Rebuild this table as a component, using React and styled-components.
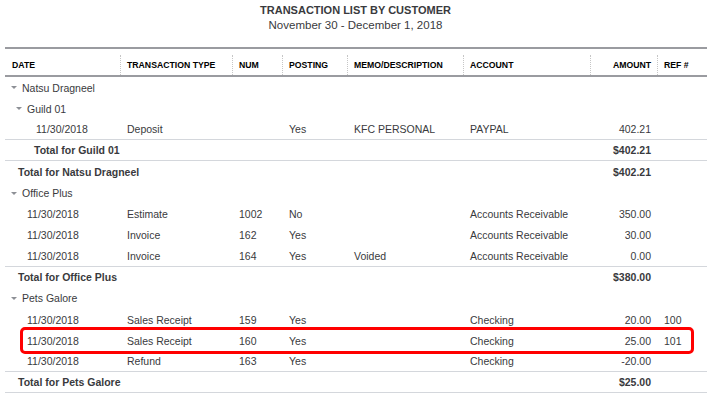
import React from "react";
import styled, { createGlobalStyle } from "styled-components";

const GlobalStyle = createGlobalStyle`
  body {
    margin: 0;
    background: #fff;
    font-family: "Liberation Sans", Arial, sans-serif;
    color: #393a3d;
  }
`;

const COLUMNS = "115px 112px 50px 65px 116px 127px 67px 50px";

const Page = styled.div`
  width: 711px;
`;

const TitleBlock = styled.header`
  height: 47px;
  padding-top: 3px;
  box-sizing: border-box;
  text-align: center;
`;

const Title = styled.h1`
  margin: 0;
  font-size: 11px;
  line-height: 14px;
  font-weight: 700;
  color: #393a3d;
`;

const Subtitle = styled.div`
  margin-top: 1px;
  font-size: 11.5px;
  line-height: 14px;
`;

const Table = styled.div`
  margin-left: 5px;
  width: 702px;
`;

const HeaderRow = styled.div`
  display: grid;
  grid-template-columns: ${COLUMNS};
  height: 30px;
  box-sizing: border-box;
  padding-top: 6px;
  border-top: 2px solid #9a9ba0;
  border-bottom: 2px solid #9a9ba0;
`;

const HeadCell = styled.div`
  display: flex;
  align-items: center;
  justify-content: ${(p) => (p.$right ? "flex-end" : "flex-start")};
  padding: 0 6px 0 ${(p) => (p.$first ? "7px" : "6px")};
  border-left: ${(p) => (p.$first ? "none" : "1px dotted #c6c6c6")};
  font-size: 8.7px;
  font-weight: 700;
  color: #000;
  white-space: nowrap;
`;

const Row = styled.div`
  position: relative;
  display: grid;
  grid-template-columns: ${COLUMNS};
  align-items: center;
  height: 21.1px;
  box-sizing: border-box;
  border-bottom: ${(p) => (p.$line ? "1px solid #d4d7dc" : "none")};
  font-size: 10.5px;
  font-weight: ${(p) => (p.$bold ? 700 : 400)};
`;

const Cell = styled.div`
  padding: 0 6px 0 ${(p) => p.$indent || 7}px;
  text-align: ${(p) => (p.$right ? "right" : "left")};
  white-space: nowrap;
  grid-column: ${(p) => p.$span || "auto"};
`;

const GroupLabel = styled.div`
  grid-column: 1 / -1;
  display: flex;
  align-items: center;
  padding-left: ${(p) => p.$indent}px;
`;

const Caret = styled.span`
  width: 0;
  height: 0;
  margin-right: 5px;
  border-left: 3px solid transparent;
  border-right: 3px solid transparent;
  border-top: 3px solid #8d9096;
`;

// red annotation drawn over the marked row
const Highlight = styled.div`
  position: absolute;
  left: 15px;
  right: 13px;
  top: -3px;
  bottom: -3px;
  border: 3px solid #ff0000;
  border-radius: 5px;
  pointer-events: none;
`;

const headers = [
  "DATE",
  "TRANSACTION TYPE",
  "NUM",
  "POSTING",
  "MEMO/DESCRIPTION",
  "ACCOUNT",
  "AMOUNT",
  "REF #",
];

const rows = [
  { kind: "group", label: "Natsu Dragneel", indent: 6 },
  { kind: "group", label: "Guild 01", indent: 11 },
  {
    kind: "txn",
    indent: 31,
    line: true,
    cells: ["11/30/2018", "Deposit", "", "Yes", "KFC PERSONAL", "PAYPAL", "402.21", ""],
  },
  { kind: "total", label: "Total for Guild 01", indent: 29, amount: "$402.21", line: true },
  { kind: "total", label: "Total for Natsu Dragneel", indent: 13, amount: "$402.21" },
  { kind: "group", label: "Office Plus", indent: 6 },
  {
    kind: "txn",
    indent: 22,
    cells: ["11/30/2018", "Estimate", "1002", "No", "", "Accounts Receivable", "350.00", ""],
  },
  {
    kind: "txn",
    indent: 22,
    cells: ["11/30/2018", "Invoice", "162", "Yes", "", "Accounts Receivable", "30.00", ""],
  },
  {
    kind: "txn",
    indent: 22,
    line: true,
    cells: ["11/30/2018", "Invoice", "164", "Yes", "Voided", "Accounts Receivable", "0.00", ""],
  },
  { kind: "total", label: "Total for Office Plus", indent: 13, amount: "$380.00" },
  { kind: "group", label: "Pets Galore", indent: 6 },
  {
    kind: "txn",
    indent: 22,
    cells: ["11/30/2018", "Sales Receipt", "159", "Yes", "", "Checking", "20.00", "100"],
  },
  {
    kind: "txn",
    indent: 22,
    marked: true,
    cells: ["11/30/2018", "Sales Receipt", "160", "Yes", "", "Checking", "25.00", "101"],
  },
  {
    kind: "txn",
    indent: 22,
    line: true,
    cells: ["11/30/2018", "Refund", "163", "Yes", "", "Checking", "-20.00", ""],
  },
  { kind: "total", label: "Total for Pets Galore", indent: 13, amount: "$25.00", line: true },
];

const ReportRow = ({ row }) => {
  if (row.kind === "group") {
    return (
      <Row $line={row.line}>
        <GroupLabel $indent={row.indent}>
          <Caret />
          {row.label}
        </GroupLabel>
      </Row>
    );
  }

  if (row.kind === "total") {
    return (
      <Row $line={row.line} $bold>
        <Cell $span="1 / 7" $indent={row.indent}>
          {row.label}
        </Cell>
        <Cell $right>{row.amount}</Cell>
        <Cell />
      </Row>
    );
  }

  return (
    <Row $line={row.line}>
      {row.cells.map((value, i) => (
        <Cell key={i} $indent={i === 0 ? row.indent : 7} $right={i === 6}>
          {value}
        </Cell>
      ))}
      {row.marked && <Highlight />}
    </Row>
  );
};

const App = () => {
  return (
    <Page>
      <GlobalStyle />
      <TitleBlock>
        <Title>TRANSACTION LIST BY CUSTOMER</Title>
        <Subtitle>November 30 - December 1, 2018</Subtitle>
      </TitleBlock>
      <Table>
        <HeaderRow>
          {headers.map((h, i) => (
            <HeadCell key={h} $first={i === 0} $right={i === 6}>
              {h}
            </HeadCell>
          ))}
        </HeaderRow>
        {rows.map((row, i) => (
          <ReportRow key={i} row={row} />
        ))}
      </Table>
    </Page>
  );
};

export default App;
